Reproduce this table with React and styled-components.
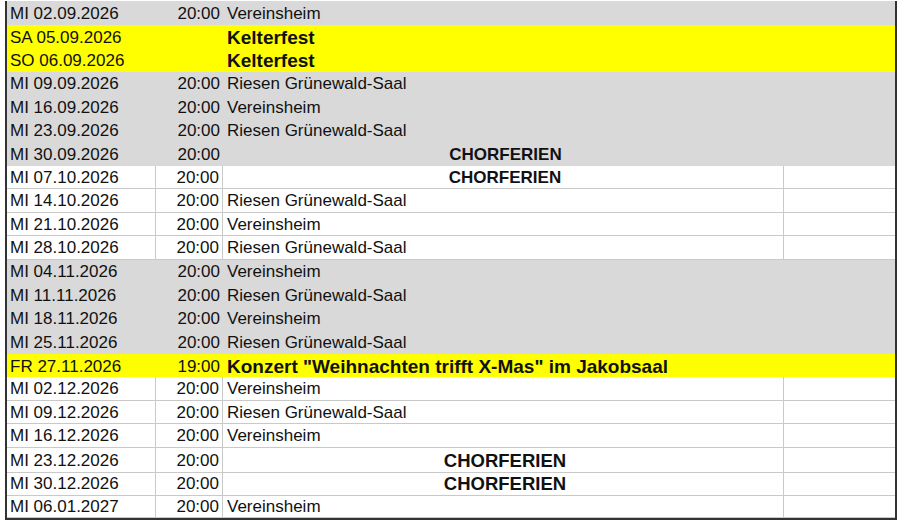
import React from "react";
import styled, { createGlobalStyle, css } from "styled-components";

const rows = [
  { date: "MI 02.09.2026", time: "20:00", place: "Vereinsheim", tone: "grey" },
  { date: "SA 05.09.2026", time: "", place: "Kelterfest", tone: "yellow" },
  { date: "SO 06.09.2026", time: "", place: "Kelterfest", tone: "yellow" },
  { date: "MI 09.09.2026", time: "20:00", place: "Riesen Grünewald-Saal", tone: "grey" },
  { date: "MI 16.09.2026", time: "20:00", place: "Vereinsheim", tone: "grey" },
  { date: "MI 23.09.2026", time: "20:00", place: "Riesen Grünewald-Saal", tone: "grey" },
  { date: "MI 30.09.2026", time: "20:00", place: "CHORFERIEN", tone: "grey", off: true },
  { date: "MI 07.10.2026", time: "20:00", place: "CHORFERIEN", tone: "white", off: true },
  { date: "MI 14.10.2026", time: "20:00", place: "Riesen Grünewald-Saal", tone: "white" },
  { date: "MI 21.10.2026", time: "20:00", place: "Vereinsheim", tone: "white" },
  { date: "MI 28.10.2026", time: "20:00", place: "Riesen Grünewald-Saal", tone: "white" },
  { date: "MI 04.11.2026", time: "20:00", place: "Vereinsheim", tone: "grey" },
  { date: "MI 11.11.2026", time: "20:00", place: "Riesen Grünewald-Saal", tone: "grey" },
  { date: "MI 18.11.2026", time: "20:00", place: "Vereinsheim", tone: "grey" },
  { date: "MI 25.11.2026", time: "20:00", place: "Riesen Grünewald-Saal", tone: "grey" },
  {
    date: "FR 27.11.2026",
    time: "19:00",
    place: 'Konzert "Weihnachten trifft X-Mas" im Jakobsaal',
    tone: "yellow",
  },
  { date: "MI 02.12.2026", time: "20:00", place: "Vereinsheim", tone: "white" },
  { date: "MI 09.12.2026", time: "20:00", place: "Riesen Grünewald-Saal", tone: "white" },
  { date: "MI 16.12.2026", time: "20:00", place: "Vereinsheim", tone: "white" },
  { date: "MI 23.12.2026", time: "20:00", place: "CHORFERIEN", tone: "white", off: true, big: true },
  { date: "MI 30.12.2026", time: "20:00", place: "CHORFERIEN", tone: "white", off: true, big: true },
  { date: "MI 06.01.2027", time: "20:00", place: "Vereinsheim", tone: "white" },
];

function App() {
  return (
    <>
      <GlobalStyle />
      <Sheet>
        {rows.map((r, i) => (
          <Row key={i} $tone={r.tone}>
            <DateCell $tone={r.tone}>{r.date}</DateCell>
            <TimeCell $tone={r.tone}>{r.time}</TimeCell>
            {r.tone === "yellow" ? (
              <EventCell>{r.place}</EventCell>
            ) : (
              <>
                <PlaceCell $tone={r.tone} $off={r.off} $big={r.big}>
                  {r.place}
                </PlaceCell>
                <NoteCell $tone={r.tone} />
              </>
            )}
          </Row>
        ))}
      </Sheet>
    </>
  );
}

export default App;

const GlobalStyle = createGlobalStyle`
  body {
    margin: 0;
    background: #ffffff;
    font-family: "Liberation Sans", Arial, sans-serif;
    color: #111;
  }
`;

const Sheet = styled.div`
  margin: 1px 0 0 5px;
  width: 892px;
  box-sizing: border-box;
  border-left: 2px solid #333;
  border-right: 2px solid #333;
  border-bottom: 2px solid #333;
`;

const bg = {
  grey: "#d9d9d9",
  yellow: "#ffff00",
  white: "#ffffff",
};

const Row = styled.div`
  display: grid;
  grid-template-columns: 149px 67px 561px 1fr;
  height: 23.5px;
  background: ${(p) => bg[p.$tone]};
`;

const cell = css`
  box-sizing: border-box;
  display: flex;
  align-items: center;
  padding-top: 2px;
  font-size: 17px;
  white-space: nowrap;
  ${(p) =>
    p.$tone === "white" &&
    css`
      border-right: 1px solid #c9c9c9;
      border-bottom: 1px solid #c9c9c9;
    `}
`;

const DateCell = styled.div`
  ${cell};
  padding-left: 3px;
`;

const TimeCell = styled.div`
  ${cell};
  justify-content: flex-end;
  padding-right: 3px;
`;

const PlaceCell = styled.div`
  ${cell};
  padding-left: 4px;
  justify-content: ${(p) => (p.$off ? "center" : "flex-start")};
  font-weight: ${(p) => (p.$off ? 700 : 400)};
  font-size: ${(p) => (p.$big ? "18.5px" : "17px")};
`;

const NoteCell = styled.div`
  ${cell};
  border-right: none !important;
`;

const EventCell = styled.div`
  ${cell};
  grid-column: 3 / 5;
  padding-left: 4px;
  font-weight: 700;
  font-size: 19px;
`;
